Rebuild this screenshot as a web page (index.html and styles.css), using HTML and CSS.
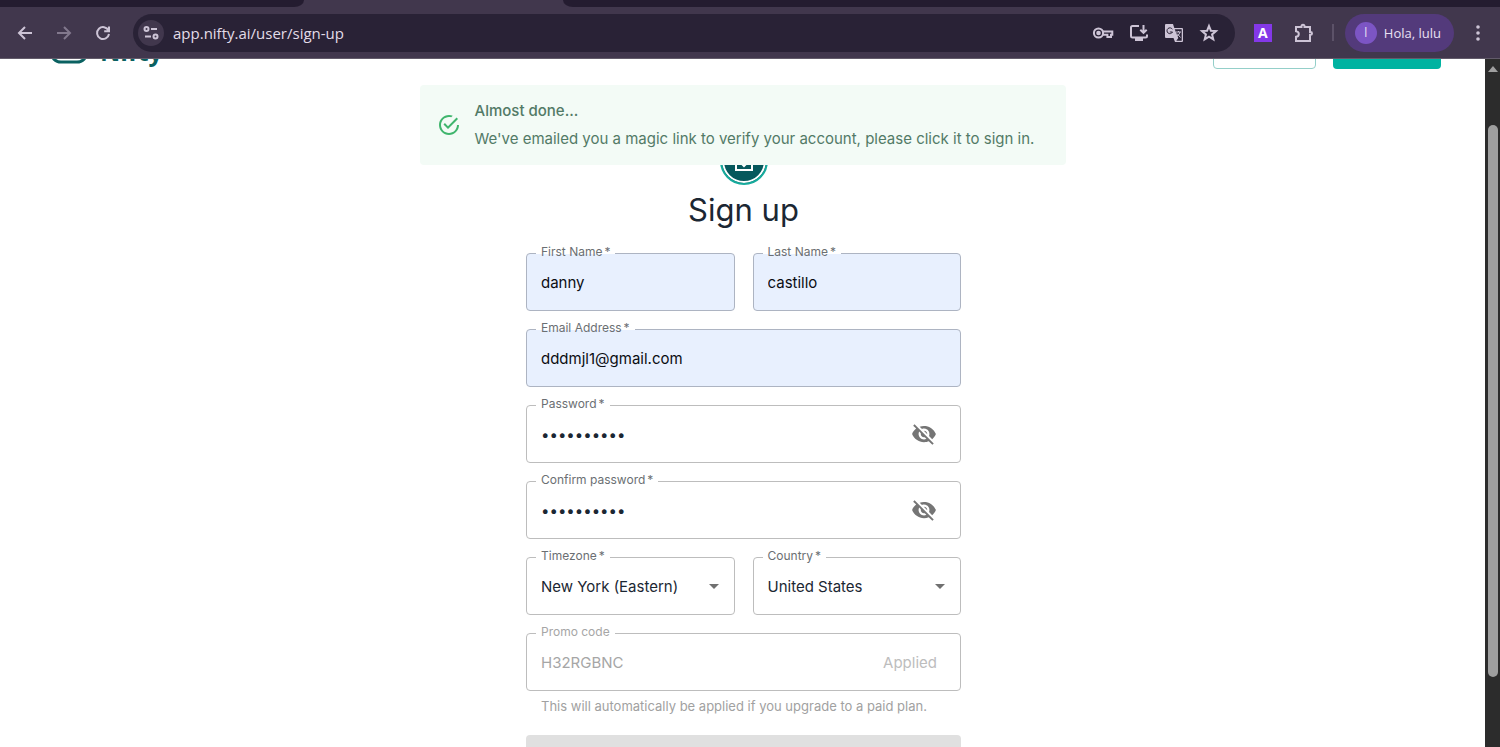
FILE: index.html
```html
<!DOCTYPE html>
<html lang="en">
<head>
<meta charset="utf-8">
<title>Sign up - Nifty</title>
<link rel="stylesheet" href="styles.css">
</head>
<body>
<header class="browser">
  <div class="tabs">
    <div class="tabs__rest tabs__rest--before"></div>
    <div class="tabs__active"></div>
    <div class="tabs__rest tabs__rest--after"></div>
  </div>
  <div class="toolbar">
    <nav class="toolbar__nav">
      <button class="tool" aria-label="Back"><svg width="20" height="20" viewBox="0 0 20 20"><path d="M17 10H4M10 4l-6 6 6 6"/></svg></button>
      <button class="tool tool--dim" aria-label="Forward"><svg width="20" height="20" viewBox="0 0 20 20"><path d="M3 10h13M10 4l6 6-6 6"/></svg></button>
      <button class="tool" aria-label="Reload"><svg width="20" height="20" viewBox="0 0 20 20"><path d="M15.500 7.500A6 6 0 1 0 16 11M16 3.500v4.800h-4.800"/></svg></button>
    </nav>
    <div class="omnibox">
      <button class="omnibox__site" aria-label="Site information"><svg width="18" height="18" viewBox="0 0 18 18"><circle cx="4.500" cy="5" r="2"/><path d="M9 5h6M3 12.500h6"/><circle cx="13.500" cy="12.500" r="2"/></svg></button>
      <input class="omnibox__url" type="text" aria-label="Address" value="app.nifty.ai/user/sign-up">
      <div class="omnibox__actions">
        <button class="tool" aria-label="Passwords"><svg width="22" height="20" viewBox="0 0 22 20"><circle cx="6.500" cy="10" r="4.600"/><circle class="solid" cx="6.500" cy="10" r="1.300"/><path d="M11 8.500h9.300v3.200h-1.300v2.300h-3.600v-2.300H11"/></svg></button>
        <button class="tool" aria-label="Install app"><svg width="20" height="20" viewBox="0 0 20 20"><path d="M10 3H3.500Q2 3 2 4.500v8.800q0 1.200 1.500 1.200h13q1.500 0 1.500-1.500v-1.500M14.500 2v7.500M11.300 6.700l3.200 3.200 3.200-3.200"/><path class="solid" d="M7 15h6v2H7z"/></svg></button>
        <button class="tool" aria-label="Translate"><svg width="20" height="20" viewBox="0 0 20 20"><path class="solid plain" d="M2 1h7l1.300 4H18q1 0 1 1v12q0 1-1 1h-7l-1.500-4H2q-1 0-1-1V2q0-1 1-1z"/><path class="cut" d="M10.700 6.200h7v11.500h-5.400l2-2.700z"/><path class="mark" d="M8.400 6.300A2.900 2.900 0 1 0 8.500 9H5.800"/><path class="thin" d="M12 9h5M14.500 8v1M16 9q-.5 3-3.500 4.500M13 10.500l3.500 4"/></svg></button>
        <button class="tool" aria-label="Bookmark"><svg width="20" height="20" viewBox="0 0 20 20"><path d="M10 3l1.900 4.700 5.100.4-3.900 3.300 1.200 5L10 13.700l-4.300 2.700 1.200-5L3 8.100l5.100-.4z"/></svg></button>
      </div>
    </div>
    <div class="toolbar__end">
      <button class="extension">A</button>
      <button class="tool" aria-label="Extensions"><svg width="22" height="22" viewBox="0 0 22 22"><path d="M3 5h5.500V4.200a1.500 1.500 0 0 1 3 0V5H17v5h.6a1.400 1.400 0 0 1 0 2.800H17V19H3v-4.200q2.800-.3 2.800-2.800T3 9.200z"/></svg></button>
      <span class="toolbar__rule"></span>
      <button class="profile"><span class="profile__badge">l</span>Hola, lulu</button>
      <button class="tool tool--menu" aria-label="Menu"><svg width="20" height="20" viewBox="0 0 20 20"><circle class="dot" cx="10" cy="4" r="1.800"/><circle class="dot" cx="10" cy="10" r="1.800"/><circle class="dot" cx="10" cy="16" r="1.800"/></svg></button>
    </div>
  </div>
</header>

<div class="viewport">
  <main class="page">
    <div class="page__content">
      <div class="site-header">
        <div class="brand">
          <svg width="40" height="40" viewBox="0 0 40 40"><rect x="2" y="4" width="36" height="33" rx="10"/></svg>
          <span>Nifty</span>
        </div>
        <div class="site-header__actions">
          <button class="site-button site-button--outline" aria-label="Log in"></button>
          <button class="site-button site-button--solid" aria-label="Get started"></button>
        </div>
      </div>

      <form class="signup">
        <div class="signup__avatar"><svg width="24" height="24" viewBox="0 0 24 24"><rect x="4" y="5" width="16" height="16"/><path d="M9 14l3 3 3-3"/></svg></div>
        <h1 class="signup__title">Sign up</h1>
        <div class="fields">
          <div class="field field--filled">
            <input id="first" type="text" value="danny">
            <label for="first">First Name<span>*</span></label>
          </div>
          <div class="field field--filled">
            <input id="last" type="text" value="castillo">
            <label for="last">Last Name<span>*</span></label>
          </div>
          <div class="field field--filled field--wide">
            <input id="email" type="email" value="dddmjl1@gmail.com">
            <label for="email">Email Address<span>*</span></label>
          </div>
          <div class="field field--wide">
            <input id="password" type="password" value="abcdefghij">
            <label for="password">Password<span>*</span></label>
            <button type="button" class="field__eye" aria-label="Show password"><svg width="26" height="26" viewBox="0 0 24 24"><path d="M12 7c2.760 0 5 2.240 5 5 0 .65-.13 1.260-.36 1.830l2.920 2.920c1.510-1.260 2.700-2.890 3.430-4.750-1.730-4.390-6-7.500-11-7.500-1.400 0-2.740.25-3.980.7l2.160 2.160C10.740 7.130 11.350 7 12 7zM2 4.270l2.280 2.280.46.46C3.080 8.300 1.780 10.020 1 12c1.730 4.390 6 7.500 11 7.500 1.550 0 3.030-.3 4.380-.84l.42.42L19.730 22 21 20.730 3.270 3 2 4.270zM7.530 9.800l1.550 1.550c-.05.21-.08.43-.08.65 0 1.660 1.340 3 3 3 .22 0 .44-.03.65-.08l1.550 1.550c-.67.33-1.410.53-2.200.53-2.760 0-5-2.240-5-5 0-.79.2-1.530.53-2.200zm4.310-.78l3.150 3.150.02-.16c0-1.660-1.340-3-3-3l-.17.01z"/></svg></button>
          </div>
          <div class="field field--wide">
            <input id="confirm" type="password" value="abcdefghij">
            <label for="confirm">Confirm password<span>*</span></label>
            <button type="button" class="field__eye" aria-label="Show confirmed password"><svg width="26" height="26" viewBox="0 0 24 24"><path d="M12 7c2.760 0 5 2.240 5 5 0 .65-.13 1.260-.36 1.830l2.920 2.920c1.510-1.260 2.700-2.890 3.430-4.750-1.730-4.390-6-7.500-11-7.500-1.400 0-2.740.25-3.980.7l2.160 2.160C10.740 7.130 11.350 7 12 7zM2 4.270l2.280 2.280.46.46C3.080 8.300 1.780 10.020 1 12c1.730 4.390 6 7.500 11 7.500 1.550 0 3.030-.3 4.380-.84l.42.42L19.730 22 21 20.730 3.270 3 2 4.270zM7.530 9.800l1.550 1.550c-.05.21-.08.43-.08.65 0 1.660 1.340 3 3 3 .22 0 .44-.03.65-.08l1.550 1.550c-.67.33-1.410.53-2.200.53-2.760 0-5-2.240-5-5 0-.79.2-1.530.53-2.200zm4.310-.78l3.150 3.150.02-.16c0-1.660-1.340-3-3-3l-.17.01z"/></svg></button>
          </div>
          <div class="field">
            <select id="timezone"><option>New York (Eastern)</option></select>
            <label for="timezone">Timezone<span>*</span></label>
            <span class="field__arrow"></span>
          </div>
          <div class="field">
            <select id="country"><option>United States</option></select>
            <label for="country">Country<span>*</span></label>
            <span class="field__arrow"></span>
          </div>
          <div class="field field--wide field--disabled">
            <input id="promo" type="text" value="H32RGBNC" disabled>
            <label for="promo">Promo code</label>
            <span class="field__status">Applied</span>
          </div>
        </div>
        <p class="signup__hint">This will automatically be applied if you upgrade to a paid plan.</p>
        <button class="signup__submit" type="submit" aria-label="Sign up" disabled></button>
      </form>
    </div>

    <div class="toast" role="status">
      <svg width="24" height="24" viewBox="0 0 24 24"><path d="M20 12c0 4.420-3.580 8-8 8s-8-3.580-8-8 3.580-8 8-8c.76 0 1.500.11 2.200.31l1.570-1.570C14.610 2.260 13.340 2 12 2 6.480 2 2 6.480 2 12s4.480 10 10 10 10-4.480 10-10h-2zM7.910 10.080L6.500 11.500 11 16 21 6l-1.410-1.420L11 13.170l-3.090-3.090z"/></svg>
      <div>
        <p class="toast__title">Almost done...</p>
        <p class="toast__text">We've emailed you a magic link to verify your account, please click it to sign in.</p>
      </div>
    </div>
  </main>
  <div class="scrollbar">
    <span class="scrollbar__up"></span>
    <span class="scrollbar__thumb"></span>
  </div>
</div>
</body>
</html>
```
FILE: styles.css
```css
* { box-sizing: border-box; }

body {
  margin: 0;
  height: 100vh;
  display: flex;
  flex-direction: column;
  overflow: hidden;
  background: #fff;
  color: #1b2733;
  font-family: Inter, "Liberation Sans", sans-serif;
}

button { padding: 0; border: 0; background: none; font: inherit; color: inherit; }
p, h1 { margin: 0; }
svg { display: block; }

/* Browser frame */
.browser { flex: none; background: #41374d; font-family: "Open Sans", "Noto Sans", sans-serif; }
.tabs { display: flex; height: 7px; }
.tabs__rest { background: #241c30; }
.tabs__rest--before { flex: 0 0 304px; border-bottom-right-radius: 10px 7px; }
.tabs__active { flex: 0 0 259px; }
.tabs__rest--after { flex: 1; border-bottom-left-radius: 10px 7px; }

.toolbar {
  display: flex;
  align-items: center;
  height: 52px;
  padding: 0 12px 0 15px;
  border-bottom: 1px solid #625b6a;
}
.toolbar__nav { display: flex; gap: 19px; margin-right: 20px; }

.tool svg, .omnibox__site svg { fill: none; stroke: #cdc4d6; stroke-width: 2; }
.tool .solid { fill: #cdc4d6; }
.tool .plain { stroke: none; }
.tool .dot { fill: #cdc4d6; stroke: none; }
.tool .cut { fill: #292236; stroke: none; }
.tool .mark { stroke: #292236; stroke-width: 1; }
.tool .thin { stroke-width: 1; }
.tool--dim svg { stroke: #82788d; }

.omnibox {
  flex: 1;
  display: flex;
  align-items: center;
  height: 38px;
  padding: 0 16px 0 5px;
  border-radius: 19px;
  background: #292236;
}
.omnibox__site {
  display: grid;
  place-items: center;
  width: 26px;
  height: 26px;
  border-radius: 50%;
  background: #41374d;
}
.omnibox__url {
  flex: 1;
  min-width: 0;
  margin-left: 9px;
  padding: 0;
  border: 0;
  background: none;
  color: #e2dce8;
  font: 15px/20px "Open Sans", "Noto Sans", sans-serif;
}
.omnibox__actions { display: flex; align-items: center; gap: 15px; }

.toolbar__end { display: flex; align-items: center; }
.extension {
  width: 18px;
  height: 18px;
  margin: 0 21px 0 19px;
  background: #8438e8;
  color: #fff;
  font-size: 14px;
  line-height: 18px;
  font-weight: 700;
}
.toolbar__rule { width: 2px; height: 17px; margin: 0 11px 0 17px; background: #5c5268; }
.profile {
  display: flex;
  align-items: center;
  gap: 7px;
  height: 38px;
  padding: 0 13px 0 10px;
  border-radius: 19px;
  background: #533a7b;
  color: #e9e0f3;
  font-size: 13px;
  font-weight: 500;
}
.profile__badge {
  width: 22px;
  height: 22px;
  border-radius: 50%;
  background: #7c55c4;
  font-size: 12px;
  line-height: 22px;
  font-weight: 400;
}
.tool--menu { margin-left: 14px; }

/* Scrolled page */
.viewport { flex: 1; min-height: 0; display: flex; }
.page { position: relative; flex: 1; overflow: hidden; }
.page__content { margin-top: -60px; padding-left: 2px; }

.site-header {
  display: flex;
  justify-content: space-between;
  align-items: flex-end;
  height: 70px;
  padding: 0 44px 0 47px;
}
.brand { display: flex; align-items: flex-end; gap: 11px; color: #0a6161; font: 700 25px/36px "Open Sans", sans-serif; }
.brand svg { margin-bottom: 4px; fill: none; stroke: #0a6161; stroke-width: 3; }
.site-header__actions { display: flex; gap: 17px; }
.site-button { height: 40px; border-radius: 4px; }
.site-button--outline { width: 103px; border: 1px solid #94cfc9; }
.site-button--solid { width: 108px; background: #00b3a1; }

/* Sign-up form */
.signup { width: 435px; max-width: 100%; margin: 0 auto; padding-top: 68px; }
.signup__avatar {
  display: grid;
  place-items: center;
  width: 48px;
  height: 48px;
  margin: 0 auto;
  border: 2px solid #16aa9c;
  border-radius: 50%;
  background: #05585c;
  box-shadow: inset 0 0 0 2px #fff;
}
.signup__avatar svg { fill: none; stroke: #fff; stroke-width: 2; }
.signup__title { padding-bottom: 18px; font-size: 31px; line-height: 50px; font-weight: 400; text-align: center; }

.fields { display: grid; grid-template-columns: repeat(2, minmax(0, 1fr)); gap: 18px; }
.field {
  position: relative;
  display: flex;
  align-items: center;
  height: 58px;
  border: 1px solid #bdbdbd;
  border-radius: 4px;
}
.field--wide { grid-column: 1 / -1; }
.field--filled { background: #e8f0fe; border-color: #adb4c2; color: #0b0d12; }
.field input, .field select {
  flex: 1;
  min-width: 0;
  height: 100%;
  padding: 0 14px;
  border: 0;
  outline: 0;
  appearance: none;
  background: none;
  color: inherit;
  font: inherit;
  font-size: 15px;
}
.field label {
  position: absolute;
  top: -10px;
  left: 9px;
  padding: 0 5px;
  background: linear-gradient(#fff 10px, transparent 10px);
  color: #6b6f73;
  font-size: 12px;
  line-height: 16px;
}
.field label span { margin-left: 2px; }
.field__eye { margin-right: 23px; }
.field__eye svg { fill: #757575; }
.field__arrow {
  position: absolute;
  right: 15px;
  border: 5px solid transparent;
  border-top-color: #707070;
  border-bottom: 0;
  pointer-events: none;
}
.field--disabled, .field--disabled label { color: #a6a6a6; }
.field__status { margin-right: 23px; color: #bdbdbd; font-size: 15px; }

.signup__hint { padding: 6px 15px 20px; color: #a1a1a1; font-size: 13px; line-height: 18px; }
.signup__submit { display: block; width: 100%; height: 42px; border-radius: 4px; background: #e0e0e0; }

/* Notice over the form */
.toast {
  position: absolute;
  top: 26px;
  left: 0;
  right: 0;
  display: flex;
  align-items: center;
  gap: 14px;
  width: 646px;
  max-width: 100%;
  margin: 0 auto;
  padding: 12px 17px;
  border-radius: 4px;
  background: #f3fbf6;
  color: #527a66;
  font-size: 15px;
  line-height: 28px;
}
.toast svg { fill: #3fb56d; }
.toast__title { font-weight: 500; }

/* Scrollbar */
.scrollbar {
  flex: none;
  display: flex;
  flex-direction: column;
  align-items: center;
  width: 15px;
  padding: 7px 0 70px;
  background: #2c2c2c;
}
.scrollbar__up { margin-bottom: 53px; border: 5px solid transparent; border-top: 0; border-bottom: 6px solid #a0a0a0; }
.scrollbar__thumb { flex: 1; width: 10px; border-radius: 5px; background: #9f9f9f; }
```
